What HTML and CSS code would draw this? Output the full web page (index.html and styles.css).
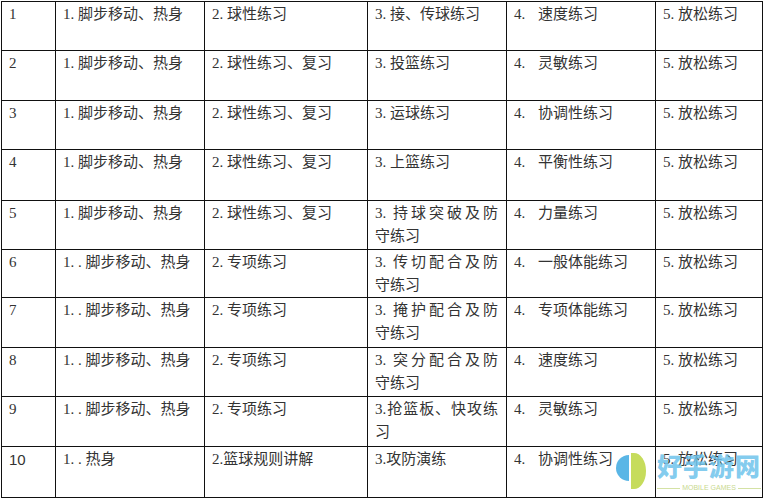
FILE: index.html
```html
<!DOCTYPE html>
<html lang="zh">
<head>
<meta charset="utf-8">
<link rel="stylesheet" href="styles.css">
</head>
<body>
<div class="page">
<table class="plan">
<colgroup>
<col class="c1"><col class="c2"><col class="c3"><col class="c4"><col class="c5"><col class="c6">
</colgroup>
<tbody>
<tr><td>1</td><td>1. 脚步移动、热身</td><td>2. 球性练习</td><td>3. 接、传球练习</td><td><span class="n4">4.</span>速度练习</td><td>5. 放松练习</td></tr>
<tr><td>2</td><td>1. 脚步移动、热身</td><td>2. 球性练习、复习</td><td>3. 投篮练习</td><td><span class="n4">4.</span>灵敏练习</td><td>5. 放松练习</td></tr>
<tr><td>3</td><td>1. 脚步移动、热身</td><td>2. 球性练习、复习</td><td>3. 运球练习</td><td><span class="n4">4.</span>协调性练习</td><td>5. 放松练习</td></tr>
<tr><td>4</td><td>1. 脚步移动、热身</td><td>2. 球性练习、复习</td><td>3. 上篮练习</td><td><span class="n4">4.</span>平衡性练习</td><td>5. 放松练习</td></tr>
<tr><td>5</td><td>1. 脚步移动、热身</td><td>2. 球性练习、复习</td><td><span class="j">3. 持球突破及防</span>守练习</td><td><span class="n4">4.</span>力量练习</td><td>5. 放松练习</td></tr>
<tr><td>6</td><td>1. . 脚步移动、热身</td><td>2. 专项练习</td><td><span class="j">3. 传切配合及防</span>守练习</td><td><span class="n4">4.</span>一般体能练习</td><td>5. 放松练习</td></tr>
<tr><td>7</td><td>1. . 脚步移动、热身</td><td>2. 专项练习</td><td><span class="j">3. 掩护配合及防</span>守练习</td><td><span class="n4">4.</span>专项体能练习</td><td>5. 放松练习</td></tr>
<tr><td>8</td><td>1. . 脚步移动、热身</td><td>2. 专项练习</td><td><span class="j">3. 突分配合及防</span>守练习</td><td><span class="n4">4.</span>速度练习</td><td>5. 放松练习</td></tr>
<tr><td>9</td><td>1. . 脚步移动、热身</td><td>2. 专项练习</td><td><span class="j">3.抢篮板、快攻练</span>习</td><td><span class="n4">4.</span>灵敏练习</td><td>5. 放松练习</td></tr>
<tr><td class="sans">10</td><td>1. . 热身</td><td>2.篮球规则讲解</td><td>3.攻防演练</td><td><span class="n4">4.</span>协调性练习</td><td>5. 放松练习</td></tr>
</tbody>
</table>
<div class="mark">
  <svg class="mark-logo" width="38" height="38" viewBox="0 0 38 38">
    <path d="M13 2 A13 13 0 0 0 13 28 Z" fill="#5ab6e6"/>
    <path d="M15 0 L18 0 A12 18 0 0 1 18 36 L15 36 Z" fill="#c6dc5c"/>
  </svg>
  <div class="mark-text">
    <div class="mark-title">好手游网</div>
    <div class="mark-sub"><span class="line"></span><span>MOBILE GAMES</span><span class="line"></span></div>
  </div>
</div>
</div>
</body>
</html>
```
FILE: styles.css
```css
html, body {
  margin: 0;
  padding: 0;
  background: #ffffff;
}
.page {
  position: relative;
  width: 764px;
  height: 499px;
  padding: 1px 0 0 1px;
  box-sizing: border-box;
}
.plan {
  border-collapse: collapse;
  table-layout: fixed;
  width: 762px;
  font-family: "Liberation Serif", "Noto Sans CJK SC", serif;
  font-size: 15px;
  line-height: 23px;
  color: #333333;
}
.c1 { width: 54px; }
.c2 { width: 149px; }
.c3 { width: 163px; }
.c4 { width: 139px; }
.c5 { width: 149px; }
.c6 { width: 107px; }
.plan td {
  border: 1px solid #111;
  vertical-align: top;
  padding: 1px 6px 0 7px;
  white-space: nowrap;
  overflow: hidden;
}
.plan tr:nth-child(1) { height: 49px; }
.plan tr:nth-child(2) { height: 50px; }
.plan tr:nth-child(3) { height: 49px; }
.plan tr:nth-child(4) { height: 51px; }
.plan tr:nth-child(5) { height: 49px; }
.plan tr:nth-child(6) { height: 46px; }
.plan tr:nth-child(7) { height: 50px; }
.plan tr:nth-child(8) { height: 49px; }
.plan tr:nth-child(9) { height: 50px; }
.plan tr:nth-child(10) { height: 51px; }
.plan td.sans { font-family: "Liberation Sans", sans-serif; }
.n4 {
  display: inline-block;
  width: 24px;
}
.j {
  display: block;
  width: 123px;
  text-align: justify;
  text-align-last: justify;
}
.mark {
  position: absolute;
  left: 616px;
  top: 452px;
  display: flex;
  align-items: flex-start;
  gap: 3px;
}
.mark-logo { display: block; margin-top: 1px; }
.mark-text {
  display: flex;
  flex-direction: column;
  align-items: stretch;
}
.mark-title {
  font-family: "Noto Sans CJK SC", sans-serif;
  font-weight: 900;
  font-size: 25px;
  line-height: 26px;
  letter-spacing: 1px;
  color: rgba(110, 195, 235, 0.85);
}
.mark-sub {
  display: flex;
  align-items: center;
  gap: 2px;
  margin-top: 6px;
  font-family: "Liberation Sans", sans-serif;
  font-size: 7px;
  line-height: 8px;
  color: #c9d98f;
  white-space: nowrap;
}
.mark-sub .line {
  flex: 1;
  height: 1px;
  background: #d4e2a4;
}
```
